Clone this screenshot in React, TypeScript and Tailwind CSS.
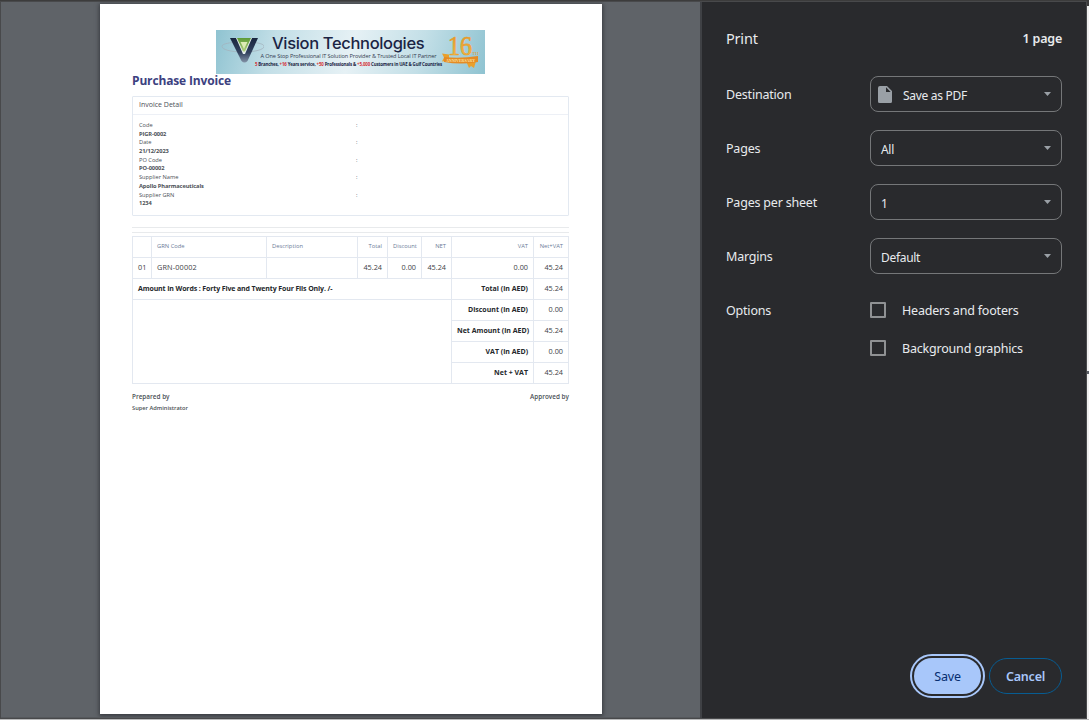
import React from "react";

const lines = [
  ["Code", "PIGR-0002"],
  ["Date", "21/12/2023"],
  ["PO Code", "PO-00002"],
  ["Supplier Name", "Apollo Pharmaceuticals"],
  ["Supplier GRN", "1234"],
];

const totals = [
  ["Total (in AED)", "45.24"],
  ["Discount (in AED)", "0.00"],
  ["Net Amount (in AED)", "45.24"],
  ["VAT (in AED)", "0.00"],
  ["Net + VAT", "45.24"],
];

function Banner() {
  return (
    <div className="ml-[84px] flex h-[44px] w-[269px] bg-[linear-gradient(105deg,#8fc3d1_0%,#c3dfe7_22%,#e6f1f5_50%,#c3dfe7_75%,#8fc3d1_100%)]">
      <svg className="h-[44px] w-[48px] shrink-0" viewBox="0 0 48 44">
        <defs>
          <linearGradient id="vg" x1="0" y1="0" x2="0" y2="1">
            <stop offset="0" stopColor="#5c9a35" />
            <stop offset="1" stopColor="#b5d284" />
          </linearGradient>
          <linearGradient id="vn" x1="0" y1="0" x2="0" y2="1">
            <stop offset="0" stopColor="#18263f" />
            <stop offset="0.6" stopColor="#33435f" />
            <stop offset="1" stopColor="#8392a6" />
          </linearGradient>
        </defs>
        <path d="M16 12.500C9 13.500 6 14.500 6 16.500c0 3 9 5.500 21 5.500s21-2.500 21-5.500c0-2-3-3-9-4" fill="none" stroke="#a3b3bd" strokeWidth="0.800" />
        <path d="M14 8h9l6 13 6-13h7L31.500 31q-3 3-6 0z" fill="url(#vn)" />
        <path d="M20 8h16l-7 16h-2z" fill="#e6efec" />
        <path d="M21 8h14l-6 13.500h-2z" fill="url(#vg)" />
        <path d="M24.500 12h7l-3.500 7z" fill="#dcebb5" />
      </svg>
      <div className="flex w-[178px] shrink-0 flex-col items-center whitespace-nowrap font-['Open_Sans',sans-serif] text-[#1b2444]">
        <div className="mt-[2px] h-[20px] w-full pl-[8px] font-[Inter,sans-serif] text-[16.500px] leading-[22px] font-medium tracking-[-0.340px]">Vision Technologies</div>
        <div className="h-[8px] pr-[9px] text-[5.600px] leading-[9px] tracking-[-0.120px] text-[#333b50]">A One Stop Professional IT Solution Provider &amp; Trusted Local IT Partner</div>
        <div className="h-[8px] pr-[9px] text-[4.400px] leading-[8px] font-bold tracking-[-0.150px]">
          <span className="text-[#d52c35]">5</span> Branches, <span className="text-[#d52c35]">+16</span> Years service, <span className="text-[#d52c35]">+50</span> Professionals &amp; <span className="text-[#d52c35]">+5,000</span> Customers in UAE &amp; Gulf Countries
        </div>
      </div>
      <svg className="h-[44px] w-[43px] shrink-0" viewBox="0 0 43 44">
        <defs>
          <linearGradient id="gold" x1="0" y1="0" x2="0" y2="1">
            <stop offset="0" stopColor="#e08a1c" />
            <stop offset="1" stopColor="#f6cb55" />
          </linearGradient>
        </defs>
        <path d="M0 23.500l7 1v6l-7 1 2-4z M24 31l3 7 2-2 3 2 2-7z" fill="#e9a02c" />
        <text x="6" y="25" fontSize="27" textLength="24" lengthAdjust="spacingAndGlyphs" fontFamily="Liberation Serif" fill="url(#gold)" stroke="#e99f2b" strokeWidth="0.700">16</text>
        <text x="30" y="25" fontSize="5" fontFamily="Liberation Serif" fill="#e19a35">TH</text>
        <path d="M2 27q16 2 34-1v6q-17 3-34 0z" fill="#e58b24" />
        <text x="4" y="32" fontSize="4.200" textLength="29" lengthAdjust="spacingAndGlyphs" fontFamily="Liberation Serif" fontWeight="bold" fill="#fbe1a1">ANNIVERSARY</text>
      </svg>
    </div>
  );
}

function Cell({ children, className = "" }: { children?: React.ReactNode; className?: string }) {
  return <div className={"border-r border-b border-[#e3e8f0] px-[5px] whitespace-nowrap " + className}>{children}</div>;
}

function HeadCell({ children, left }: { children?: React.ReactNode; left?: boolean }) {
  return <Cell className={"text-[5.800px] leading-[18px] text-[#6b7b98] " + (left ? "text-left" : "")}>{children}</Cell>;
}

function InvoiceTable() {
  return (
    <div className="mt-[3px] grid w-[437px] grid-cols-[19px_115px_91px_30px_34px_30px_82px_35px] auto-rows-[21px] border-t border-l border-[#e3e8f0] text-right text-[7.300px] leading-[19px] text-[#3d4146]">
      <HeadCell />
      <HeadCell left>GRN Code</HeadCell>
      <HeadCell left>Description</HeadCell>
      <HeadCell>Total</HeadCell>
      <HeadCell>Discount</HeadCell>
      <HeadCell>NET</HeadCell>
      <HeadCell>VAT</HeadCell>
      <HeadCell>Net+VAT</HeadCell>
      <Cell className="text-left">01</Cell>
      <Cell className="text-left tracking-[0.150px]">GRN-00002</Cell>
      <Cell />
      <Cell>45.24</Cell>
      <Cell>0.00</Cell>
      <Cell>45.24</Cell>
      <Cell>0.00</Cell>
      <Cell>45.24</Cell>
      <Cell className="col-span-6 text-left text-[7px] leading-[20px] font-bold tracking-[-0.130px] text-[#25282c]">Amount In Words : Forty Five and Twenty Four Fils Only. /-</Cell>
      <Cell className="text-[7px] leading-[20px] font-bold text-[#25282c]">{totals[0][0]}</Cell>
      <Cell>{totals[0][1]}</Cell>
      <Cell className="col-span-6 row-span-4" />
      {totals.slice(1).map(([k, v]) => (
        <React.Fragment key={k}>
          <Cell className="text-[7px] leading-[20px] font-bold text-[#25282c]">{k}</Cell>
          <Cell>{v}</Cell>
        </React.Fragment>
      ))}
    </div>
  );
}

function Page() {
  return (
    <div className="ml-[99px] mt-[2px] h-[710px] w-[502px] bg-white pl-[32px] pt-[26px] font-['Open_Sans',sans-serif] text-[#4b5056] shadow-[0_1px_4px_1px_rgba(30,32,36,0.6)]">
      <Banner />
      <h1 className="h-[22px] text-[12px] leading-[13px] font-bold tracking-[-0.150px] text-[#3c4180]">Purchase Invoice</h1>
      <section className="h-[120px] w-[437px] rounded-[1px] border border-[#e3e9f1]">
        <div className="h-[18px] border-b border-[#edf0f6] pl-[6px] text-[7px] leading-[16px]">Invoice Detail</div>
        <div className="pt-[6px]">
          {lines.map(([k, v]) => (
            <div key={k} className="grid h-[17.400px] grid-cols-[217px_1fr] pl-[6px] text-[5.700px] leading-[8.700px]">
              <span>{k}</span>
              <span>:</span>
              <span className="font-bold tracking-[-0.100px]">{v}</span>
            </div>
          ))}
        </div>
      </section>
      <div className="mt-[11px] h-[6px] w-[437px] border-y border-[#e8eaec]" />
      <InvoiceTable />
      <div className="mt-[7px] flex h-[12px] w-[437px] justify-between text-[6.400px] leading-[11px] font-semibold">
        <span>Prepared by</span>
        <span>Approved by</span>
      </div>
      <div className="text-[5.700px] leading-[11px] font-semibold">Super Administrator</div>
    </div>
  );
}

function Select({ value, icon }: { value: string; icon?: boolean }) {
  return (
    <div className="flex h-[36px] w-[192px] items-center rounded-[8px] border border-[#757779] pl-[7px] pr-[10px] text-[12px] tracking-[-0.300px]">
      {icon && (
        <svg className="mr-[11px] h-[17px] w-[14px]" viewBox="0 0 14 17">
          <path d="M2 0h7l5 5v10.500q0 1.500-1.500 1.500h-11Q0 17 0 15.500V2Q0 0 2 0zM8 1.300V6h4.700z" fill="#9aa0a6" fillRule="evenodd" />
        </svg>
      )}
      <span className={icon ? "pt-[3px]" : "pl-[3px] pt-[3px]"}>{value}</span>
      <svg className="ml-auto h-[4px] w-[7px]" viewBox="0 0 7 4">
        <path d="M0 0h7L3.500 4z" fill="#9aa0a6" />
      </svg>
    </div>
  );
}

function Setting({ label, children }: { label: string; children: React.ReactNode }) {
  return (
    <div className="flex h-[54px] items-center">
      <span className="w-[144px] pt-[2px]">{label}</span>
      {children}
    </div>
  );
}

function Check({ label }: { label: string }) {
  return (
    <div className="flex h-[38px] items-center">
      <span className="mr-[16px] size-[16px] rounded-[1px] border-2 border-[#8f9193]" />
      <span className="pt-[2px]">{label}</span>
    </div>
  );
}

export default function App() {
  return (
    <div className="flex h-[720px] w-[1089px] flex-col overflow-hidden bg-[#b9babb]">
      <div className="h-px bg-[#3c3c3c]" />
      <div className="flex h-[718px]">
        <div className="flex h-[718px] w-[1087px] border border-[#48494b]">
          <main className="w-[699px] overflow-hidden border-b border-[#55585c] bg-[#5f6368]">
            <Page />
          </main>
          <aside className="flex flex-1 flex-col border-l-2 border-[#3f4145] bg-[#292a2d] pl-[24px] pr-[24px] font-['Noto_Sans',sans-serif] text-[12.500px] tracking-[-0.200px] text-[#e8eaed]">
            <header className="mt-[16px] flex h-[40px] items-center justify-between">
              <span className="pt-[2px] text-[14.500px] tracking-[-0.200px]">Print</span>
              <span className="pt-[3px] font-semibold">1 page</span>
            </header>
            <div className="mt-[9px]">
              <Setting label="Destination"><Select value="Save as PDF" icon /></Setting>
              <Setting label="Pages"><Select value="All" /></Setting>
              <Setting label="Pages per sheet"><Select value="1" /></Setting>
              <Setting label="Margins"><Select value="Default" /></Setting>
            </div>
            <div className="mt-[8px] flex">
              <span className="w-[144px] leading-[40px]">Options</span>
              <div>
                <Check label="Headers and footers" />
                <Check label="Background graphics" />
              </div>
            </div>
            <div className="mt-auto mb-[20px] flex items-center justify-end gap-[4px]">
              <button className="rounded-full border-2 border-[#a8c7fa] p-[2px]">
                <span className="flex h-[36px] w-[67px] items-center justify-center rounded-full bg-[#a8c7fa] pt-[2px] text-[#062e6f]">Save</span>
              </button>
              <button className="h-[36px] w-[73px] rounded-full border border-[#075c92] pt-[2px] font-semibold text-[#a8c7fa]">Cancel</button>
            </div>
          </aside>
        </div>
        <div className="h-[718px] w-[2px] border-t-5 border-[#3c3c3c] bg-[#f0f0f0] pt-[365px]">
          <div className="h-[3px] bg-[#5b6068]" />
        </div>
      </div>
    </div>
  );
}
